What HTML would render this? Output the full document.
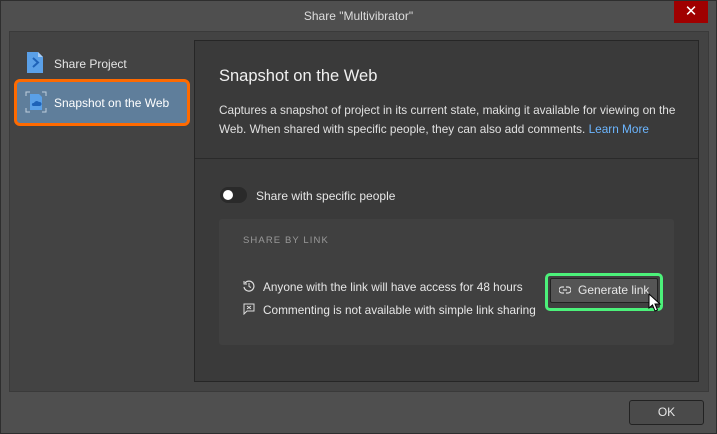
<!DOCTYPE html>
<html><head><style>
*{margin:0;padding:0;box-sizing:border-box}
body{width:717px;height:434px;background:#4f4f4f;font-family:"Liberation Sans",sans-serif;color:#e6e6e6;position:relative;overflow:hidden;font-size:12px}
.a{position:absolute;white-space:nowrap}
</style></head><body>
<div class="a" style="left:0;top:0;width:717px;height:434px;border:1px solid #2e2e2e"></div>
<div class="a" style="left:0;top:9px;width:717px;text-align:center;font-size:12px;color:#ddd">Share "Multivibrator"</div>
<div class="a" style="left:674px;top:1px;width:34px;height:22px;background:#a00000;color:#fff;text-align:center;font-size:15px;line-height:22px">✕</div>
<div class="a" style="left:9px;top:31px;width:700px;height:361px;background:#434343;border:1px solid #3a3a3a"></div>
<div class="a" style="left:194px;top:40px;width:505px;height:342px;background:#3a3a3a;border:1px solid #262626"></div>
<svg class="a" style="left:26px;top:51px" width="18" height="23"><path d="M1 1h11l5 5v16H1z" fill="#5aa0e8"/><path d="M12 1v5h5z" fill="#a8ccf3"/><path d="M7 7l5 4.5-5 4.5" stroke="#1e62b8" stroke-width="2" fill="none"/></svg>
<div class="a" style="left:54px;top:57px;font-size:12px">Share Project</div>
<div class="a" style="left:14px;top:79px;width:176px;height:47px;border:3px solid #ff6a00;border-radius:6px;background:#5f7e9b"></div>
<svg class="a" style="left:25px;top:91px" width="22" height="22"><path d="M1 5V1h4M17 1h4v4M21 17v4h-4M5 21H1v-4" stroke="#bfcfdd" fill="none"/><path d="M5 3h9l3 3v13H5z" fill="#5aa0e8"/><path d="M8 15h7a2 2 0 0 0-1-4 3 3 0 0 0-5 1 1.5 1.5 0 0 0-1 3z" fill="#1e62b8"/></svg>
<div class="a" style="left:54px;top:96px;color:#fff;font-size:12px">Snapshot on the Web</div>
<div class="a" style="left:219px;top:67px;font-size:16.5px;color:#f0f0f0">Snapshot on the Web</div>
<div class="a" style="left:219px;top:101px;width:470px;line-height:19px;font-size:11.8px;color:#e0e0e0;white-space:normal">Captures a snapshot of project in its current state, making it available for viewing on the Web. When shared with specific people, they can also add comments. <span style="color:#6cb6ff">Learn More</span></div>
<div class="a" style="left:195px;top:158px;width:503px;height:1px;background:#2a2a2a"></div>
<div class="a" style="left:220px;top:187px;width:27px;height:16px;border-radius:8px;background:#2a2a2a"></div>
<div class="a" style="left:223px;top:190px;width:10px;height:10px;border-radius:5px;background:#fff"></div>
<div class="a" style="left:256px;top:189px;font-size:12px">Share with specific people</div>
<div class="a" style="left:219px;top:219px;width:455px;height:126px;background:#404040;border-radius:3px"></div>
<div class="a" style="left:243px;top:235px;font-size:9.5px;letter-spacing:1.1px;color:#999">SHARE BY LINK</div>
<svg class="a" style="left:243px;top:280px" width="12" height="12"><path d="M2 3a5 5 0 1 1-1 4" stroke="#ddd" fill="none" stroke-width="1.2"/><path d="M1 1v3h3" stroke="#ddd" fill="none"/><path d="M6 3v3.5l2 1" stroke="#ddd" fill="none"/></svg>
<div class="a" style="left:263px;top:280px;font-size:11.8px">Anyone with the link will have access for 48 hours</div>
<svg class="a" style="left:243px;top:303px" width="12" height="12"><path d="M1 1h10v7H4l-3 3z" stroke="#ddd" fill="none"/><path d="M4 3l4 3M8 3l-4 3" stroke="#ddd"/></svg>
<div class="a" style="left:263px;top:303px;font-size:11.8px">Commenting is not available with simple link sharing</div>
<div class="a" style="left:545px;top:273px;width:118px;height:38px;border:3px solid #4cf17a;border-radius:5px"></div>
<div class="a" style="left:550px;top:278px;width:108px;height:25px;background:#555;border:1px solid #222;border-radius:2px"></div>
<svg class="a" style="left:559px;top:286px" width="12" height="8"><path d="M5 1H3a3 3 0 0 0 0 6h2M7 1h2a3 3 0 0 1 0 6H7M4 4h4" stroke="#ddd" fill="none" stroke-width="1.2"/></svg>
<div class="a" style="left:578px;top:283px;font-size:12px">Generate link</div>
<svg class="a" style="left:648px;top:293px" width="14" height="20"><path d="M1 1v14l3.5-3 2.5 6 2.5-1-2.5-6h5z" fill="#fff" stroke="#000"/></svg>
<div class="a" style="left:629px;top:400px;width:75px;height:25px;border:1px solid #222;border-radius:3px;background:#4a4a4a;text-align:center;line-height:23px;font-size:12px">OK</div>
</body></html>
